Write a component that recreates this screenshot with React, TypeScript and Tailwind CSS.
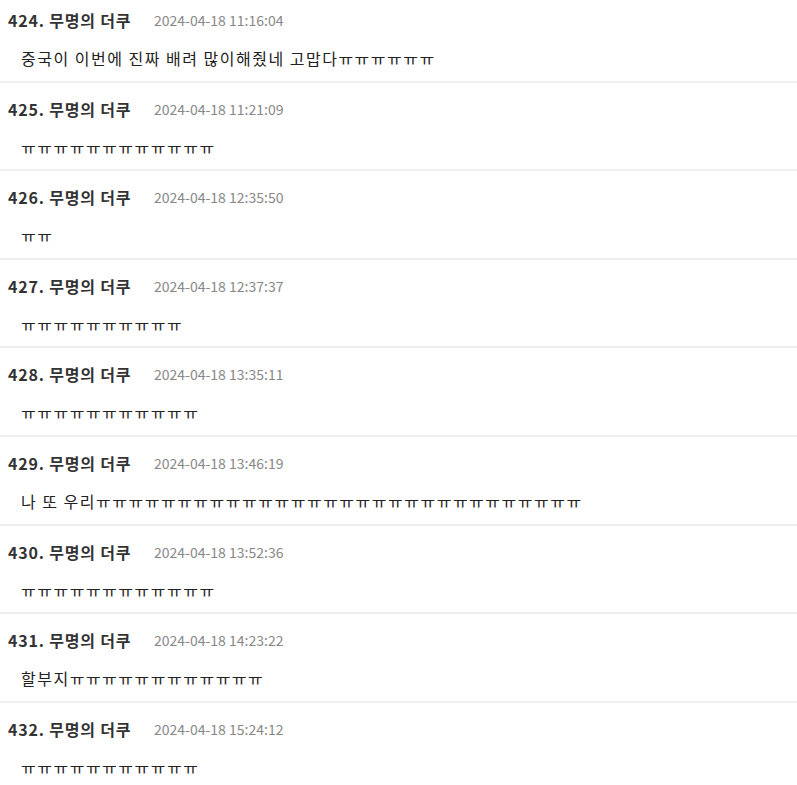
const comments = [
  { no: 424, time: '2024-04-18 11:16:04', body: '중국이 이번에 진짜 배려 많이해줬네 고맙다ㅠㅠㅠㅠㅠㅠ' },
  { no: 425, time: '2024-04-18 11:21:09', body: 'ㅠ'.repeat(12) },
  { no: 426, time: '2024-04-18 12:35:50', body: 'ㅠㅠ' },
  { no: 427, time: '2024-04-18 12:37:37', body: 'ㅠ'.repeat(10) },
  { no: 428, time: '2024-04-18 13:35:11', body: 'ㅠ'.repeat(11) },
  { no: 429, time: '2024-04-18 13:46:19', body: '나 또 우리' + 'ㅠ'.repeat(30) },
  { no: 430, time: '2024-04-18 13:52:36', body: 'ㅠ'.repeat(12) },
  { no: 431, time: '2024-04-18 14:23:22', body: '할부지' + 'ㅠ'.repeat(12) },
  { no: 432, time: '2024-04-18 15:24:12', body: 'ㅠ'.repeat(11) },
]

export default function App() {
  return (
    <div
      className="w-[797px] h-[785px] overflow-hidden bg-white text-[#333]"
      style={{ fontFamily: '"Noto Sans CJK KR", "Noto Sans", sans-serif' }}
    >
      <ul>
        {comments.map((c, i) => (
          <li
            key={c.no}
            className={
              i === 0
                ? 'pt-[8px] pb-[10.6px] border-b-2 border-[#eeeeee]'
                : 'pt-[14px] pb-[10.6px] border-b-2 border-[#eeeeee]'
            }
          >
            <div className="flex items-center h-6 pl-2">
              <span className="text-[16px] font-bold leading-6 w-[146px] tracking-[0.8px]">
                {c.no}. 무명의 더쿠
              </span>
              <span className="text-[14px] leading-6 text-[#888]">{c.time}</span>
            </div>
            <div className="mt-[14px] pl-[21px] text-[16px] leading-6 tracking-[1.5px] text-[#222]">
              {c.body}
            </div>
          </li>
        ))}
      </ul>
    </div>
  )
}
